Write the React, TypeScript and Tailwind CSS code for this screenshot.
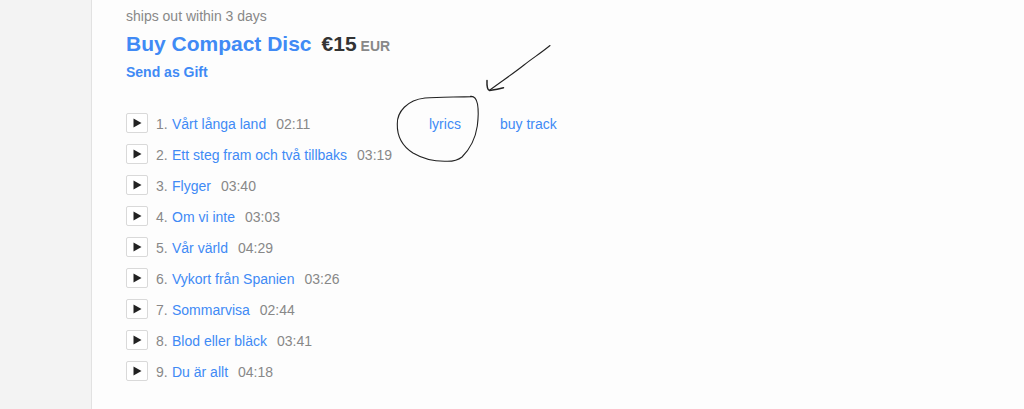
const tracks = [
  { title: 'Vårt långa land', time: '02:11', lyrics: true, buy: true },
  { title: 'Ett steg fram och två tillbaks', time: '03:19' },
  { title: 'Flyger', time: '03:40' },
  { title: 'Om vi inte', time: '03:03' },
  { title: 'Vår värld', time: '04:29' },
  { title: 'Vykort från Spanien', time: '03:26' },
  { title: 'Sommarvisa', time: '02:44' },
  { title: 'Blod eller bläck', time: '03:41' },
  { title: 'Du är allt', time: '04:18' },
]

function PlayButton({ title }: { title: string }) {
  return (
    <button
      type="button"
      aria-label={`Play ${title}`}
      className="flex h-5 w-[22px] items-center justify-center rounded-xs border border-[#d9d9d9] bg-white"
    >
      <svg width="9" height="10" viewBox="0 0 9 10" fill="#222" aria-hidden="true">
        <path d="M.5.5 8.500 5 .5 9.500z" />
      </svg>
    </button>
  )
}

// Hand-drawn circle and arrow that sit on top of the lyrics link
function LyricsMarker() {
  return (
    <svg
      width="160"
      height="124"
      viewBox="394 42 160 124"
      fill="none"
      stroke="#222"
      strokeWidth="1.1"
      strokeLinecap="round"
      strokeLinejoin="round"
      aria-hidden="true"
      className="pointer-events-none absolute -left-[35px] -top-[72px] max-w-none"
    >
      <path d="M472 96.600C455 97.200 437 96.600 425 98C407 100 397 112 397.300 124C397 136 402 146 413 153C424 159.500 436 161.500 446 161.300C452 161.500 457 161 462 157C470 149 475.500 138 477.300 126C478.300 118 478.600 110 477.500 104C476.500 99 474 96 470.500 96.400" />
      <path d="M550 45.500C541 53 532 58.500 524 65C514 73 502 81 489.500 90.300" />
      <path strokeWidth="1.500" d="M487 80.500C486.800 85 487.200 90 489.500 90.500C494 90 499 89.200 503.500 87.800" />
    </svg>
  )
}

export default function App() {
  return (
    <div className="flex min-h-screen bg-[#fdfdfd] font-['Helvetica_Neue','Liberation_Sans',Arial,sans-serif] text-sm text-[#888]">
      <aside className="w-23 shrink-0 border-r border-[#e2e2e2] bg-[#f3f3f3]" />

      <main className="min-w-0 flex-1 pb-6 pl-[34px] pt-1.5">
        <p className="leading-5">ships out within 3 days</p>
        <h4 className="mt-1 flex items-baseline text-[21px] font-bold leading-7">
          <a href="#buy" className="text-[#408af5]">Buy Compact Disc</a>
          <span className="ml-2.5 text-[#333]">€15</span>
          <span className="ml-1 text-sm">EUR</span>
        </h4>
        <p className="mt-1 leading-5">
          <a href="#gift" className="font-bold text-[#408af5]">Send as Gift</a>
        </p>

        <table className="mt-[26px] border-collapse">
          <tbody>
            {tracks.map((track, i) => (
              <tr key={track.title} className="h-[31px]">
                <td className="w-[30px] p-0 pb-px">
                  <PlayButton title={track.title} />
                </td>
                <td className="w-4 p-0">{i + 1}.</td>
                <td className="w-[257px] p-0 whitespace-nowrap">
                  <a href={`#track-${i + 1}`} className="text-[#408af5]">{track.title}</a>
                  <span className="ml-2.5">{track.time}</span>
                </td>
                <td className="w-[71px] p-0">
                  {track.lyrics && (
                    <div className="relative">
                      <a href="#lyrics" className="text-[#408af5]">lyrics</a>
                      <LyricsMarker />
                    </div>
                  )}
                </td>
                <td className="p-0 whitespace-nowrap">
                  {track.buy && (
                    <a href="#buy-track" className="text-[#408af5]">buy track</a>
                  )}
                </td>
              </tr>
            ))}
          </tbody>
        </table>
      </main>
    </div>
  )
}
